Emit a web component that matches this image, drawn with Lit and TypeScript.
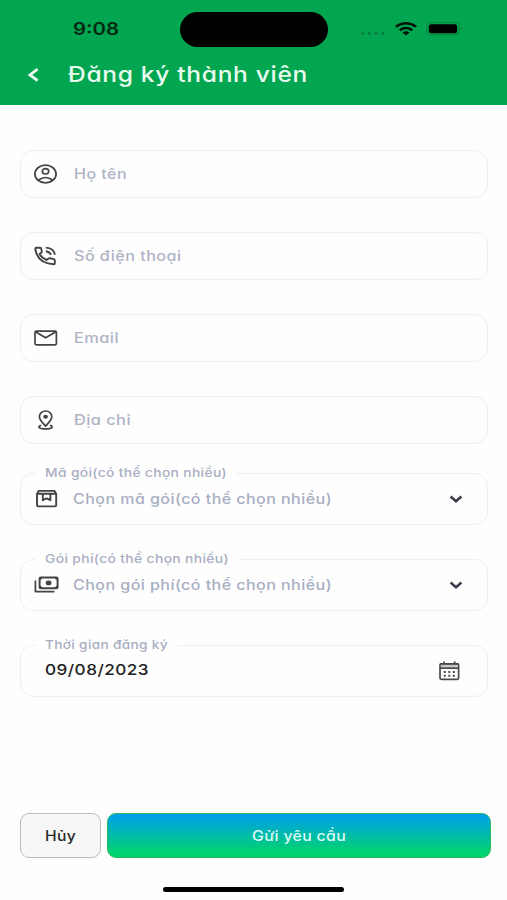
import { LitElement, html, svg, css } from "lit";
import { customElement, property } from "lit/decorators.js";

// One line of text, stretched horizontally to a given width.
@customElement("fit-text")
class FitText extends LitElement {
  @property({ type: Number }) width = 0;

  static styles = css`
    :host { display: block; flex: none; height: 1.3em; line-height: 1.3em; white-space: nowrap; }
    .line { display: inline-block; vertical-align: top; transform-origin: left center; }
  `;

  firstUpdated() {
    this.style.width = `${this.width}px`;
    const line = this.renderRoot.querySelector(".line") as HTMLElement;
    line.style.transform = `scaleX(${this.width / line.getBoundingClientRect().width})`;
  }

  render() {
    return html`<span class="line"><slot></slot></span>`;
  }
}

const icons: Record<string, unknown> = {
  user: svg`<ellipse cx="13.5" cy="12" rx="10.6" ry="8.8"/><ellipse cx="13.5" cy="9.3" rx="3.2" ry="2.7"/><path d="M6.2 18.2Q13.5 12.8 20.8 18.2"/>`,
  phone: svg`<path d="M4.2 3.8H8.2Q9 3.8 9.2 4.6L9.8 7.4Q9.9 8.2 9.3 8.7L7.6 10.1Q9.8 14 14.6 16L16.4 14.6Q17 14.1 17.8 14.3L21.8 15.1Q22.8 15.4 22.8 16.2V19.2Q22.8 20.2 21.6 20.2Q5.4 19.2 3.3 5Q3.2 3.8 4.2 3.8Z" stroke-width="1.9"/><path d="M13.8 3.6Q21.8 4 23 10.6M13.8 7.2Q17.8 7.6 18.9 10.8" stroke-width="1.9"/>`,
  mail: svg`<rect x="3" y="5.2" width="21.4" height="13.6" rx="1.3"/><path d="M3.4 5.8L13.6 11.8L24 5.8"/>`,
  pin: svg`<path d="M13.6 18.2C10.4 14.4 7.4 12 7.4 8.7C7.4 5.4 10.2 3 13.6 3S19.8 5.4 19.8 8.7C19.8 12 16.8 14.4 13.6 18.2Z"/><ellipse cx="13.6" cy="8.7" rx="1.5" ry="1.2" fill="currentColor"/><path d="M9.3 17.3C5.4 18.2 6 20.9 13.6 20.9S21.8 18.2 17.9 17.3"/>`,
  box: svg`<path d="M5 7L6.6 3.9H22.6L24.2 7V18.2Q24.2 19.4 23 19.4H6.2Q5 19.4 5 18.2ZM5 6.8H24.2M10.8 7V13.2L14.6 11.4L18.4 13.2V7" stroke-width="1.9"/>`,
  cash: svg`<rect x="7.6" y="4.6" width="18" height="10.6" rx="1.2" stroke-width="2"/><ellipse cx="16.6" cy="9.9" rx="2.9" ry="2.3" fill="currentColor" stroke="none"/><path d="M8 6.4L9.8 5M25.2 6.4L23.4 5M8 13.4L9.8 14.8M25.2 13.4L23.4 14.8"/><path d="M3.4 7.6V18.6H22.4"/>`,
  calendar: svg`<rect x="4" y="4.8" width="18.6" height="15.6" rx="1.3"/><path d="M5 7H21.6" stroke="#c6c6c6" stroke-width="2.6"/><path d="M4 9.2H22.6M4 4.8H22.6M8 2.4V5M18.7 2.4V5"/><path d="M7.8 13H9.8M12.3 13H14.3M16.8 13H18.8M7.8 16.8H9.8M12.3 16.8H14.3M16.8 16.8H18.8" stroke-width="2"/>`,
};

const icon = (name: string) => html`
  <svg class="icon" width="28" height="24" viewBox="0 0 28 24" fill="none" stroke="currentColor" stroke-width="1.7" stroke-linejoin="round">${icons[name]}</svg>`;

const inputs = [
  { icon: "user", text: "Họ tên", width: 53 },
  { icon: "phone", text: "Số điện thoại", width: 107.5 },
  { icon: "mail", text: "Email", width: 45 },
  { icon: "pin", text: "Địa chỉ", width: 57 },
];

const selects = [
  { icon: "box", label: "Mã gói(có thể chọn nhiều)", labelWidth: 182, text: "Chọn mã gói(có thể chọn nhiều)", width: 259 },
  { icon: "cash", label: "Gói phí(có thể chọn nhiều)", labelWidth: 184, text: "Chọn gói phí(có thể chọn nhiều)", width: 259 },
];

@customElement("app-root")
class AppRoot extends LitElement {
  static styles = css`
    :host {
      display: flex; flex-direction: column; box-sizing: border-box;
      width: 507px; height: 900px; overflow: hidden; background: #fefefe; color: #242426;
      font-family: Inter, "Noto Sans", sans-serif; font-feature-settings: "cv11", "ss03";
    }
    header { height: 105px; background: #02a650; flex: none; }
    .status { display: grid; grid-template-columns: 73px 107px 148px 32px 1fr; height: 58px; align-items: center; }
    .time { grid-column: 2; padding-top: 1px; font-size: 17px; font-weight: 600; color: #052813; }
    .island { grid-column: 3; height: 35px; border-radius: 18px; background: #000; }
    .signals { grid-column: 5; }
    .signals svg, .icon, .chevron, .back { display: block; flex: none; }
    .bar { display: flex; align-items: center; height: 33px; padding-left: 26px; gap: 26px; color: #e9fbef; }
    .title { font-size: 21.5px; font-weight: 500; letter-spacing: 0.6px; }
    form { display: flex; flex-direction: column; padding: 45px 19px 0 20px; }
    .field {
      position: relative; display: flex; align-items: center; box-sizing: border-box;
      height: 48px; margin-bottom: 34px; padding-left: 11px; border: 1.5px solid #eeeff1; border-radius: 13px;
    }
    .icon { color: #434345; }
    .hint { margin-left: 14px; font-size: 14px; font-weight: 500; letter-spacing: 0.4px; color: #aeb3c5; }
    .select { height: 52px; }
    .field.last { margin-bottom: 29px; }
    .select .hint { margin-left: 13px; font-size: 14.3px; color: #a8aec2; }
    .chevron { margin-left: auto; margin-right: 23px; }
    .label { position: absolute; left: 13.5px; top: -9px; padding: 0 10px; background: #fefefe; font-size: 12.2px; font-weight: 500; letter-spacing: 0.3px; color: #a8aec2; }
    .date { margin-left: 13px; margin-top: -1px; font-size: 14.8px; font-weight: 550; letter-spacing: 0.4px; color: #202022; }
    .date + .icon { margin-left: auto; margin-right: 23px; color: #4b4b4d; }
    footer { display: flex; gap: 6px; padding: 0 16px 0 19.5px; margin-top: auto; flex: none; }
    button { display: flex; align-items: center; justify-content: center; box-sizing: border-box; height: 45px; padding: 1px 0 0; margin: 0; border-radius: 9px; font: inherit; font-size: 14.3px; font-weight: 500; font-feature-settings: inherit; letter-spacing: 0.3px; }
    .cancel { width: 81px; padding-right: 2px; background: #f7f7f8; border: 1.5px solid #bdbdbf; color: #29292b; font-weight: 550; }
    .send { flex: 1; padding-right: 1px; border: 1px solid #27b95f; background: linear-gradient(#00a0e8 4%, #00d36e 90%); color: #dcfaf5; }
    .home { flex: none; align-self: center; width: 181px; height: 5px; border-radius: 3px; background: #000; margin: 29px 0 8px; }
    .send fit-text { margin-right: 7px; }
  `;

  render() {
    return html`
      <header>
        <div class="status">
          <fit-text class="time" width="46">9:08</fit-text>
          <div class="island"></div>
          <div class="signals">
            <svg width="106" height="20" viewBox="360 19 106 20">
              <g fill="#078341"><circle cx="362.5" cy="33.5" r="1.7"/><circle cx="369.3" cy="33.5" r="1.7"/><circle cx="376" cy="33.5" r="1.7"/><circle cx="383" cy="33.5" r="1.7"/></g>
              <g fill="none" stroke="#02130a" stroke-width="2.6"><path d="M395.8 26.8Q406 19.8 416.2 26.8"/><path d="M399.7 30.2Q406 25.8 412.3 30.2"/></g>
              <path d="M402.4 32.6Q406 30 409.6 32.6L406 35.4Z" fill="#02130a"/>
              <rect x="426.6" y="22.7" width="33" height="12" rx="4" fill="none" stroke="#078341"/>
              <rect x="428.8" y="24.2" width="28.4" height="9" rx="2.6" fill="#000"/>
              <path d="M461 26.7Q464.2 28.6 461 30.5Z" fill="#078341"/>
            </svg>
          </div>
        </div>
        <div class="bar">
          <svg class="back" width="16" height="18" viewBox="0 0 16 18" fill="none" stroke="#eefcf3" stroke-width="2.8"><path d="M11.6 3.1L3.9 8.9L11.6 14.7"/></svg>
          <fit-text class="title" width="240">Đăng ký thành viên</fit-text>
        </div>
      </header>
      <form>
        ${inputs.map((f, i) => html`
          <div class="field ${i === inputs.length - 1 ? "last" : ""}">${icon(f.icon)}<fit-text class="hint" width=${f.width}>${f.text}</fit-text></div>`)}
        ${selects.map((f) => html`
          <div class="field select">
            <fit-text class="label" width=${f.labelWidth}>${f.label}</fit-text>
            ${icon(f.icon)}<fit-text class="hint" width=${f.width}>${f.text}</fit-text>
            <svg class="chevron" width="16" height="12" viewBox="0 0 16 12" fill="none" stroke="#3c3e4c" stroke-width="2.6"><path d="M2.6 3.6L8 8.2L13.4 3.6"/></svg>
          </div>`)}
        <div class="field select">
          <fit-text class="label" width="123">Thời gian đăng ký</fit-text>
          <fit-text class="date" width="104">09/08/2023</fit-text>${icon("calendar")}
        </div>
      </form>
      <footer>
        <button class="cancel"><fit-text width="31">Hủy</fit-text></button>
        <button class="send"><fit-text width="94">Gửi yêu cầu</fit-text></button>
      </footer>
      <div class="home"></div>
    `;
  }
}
